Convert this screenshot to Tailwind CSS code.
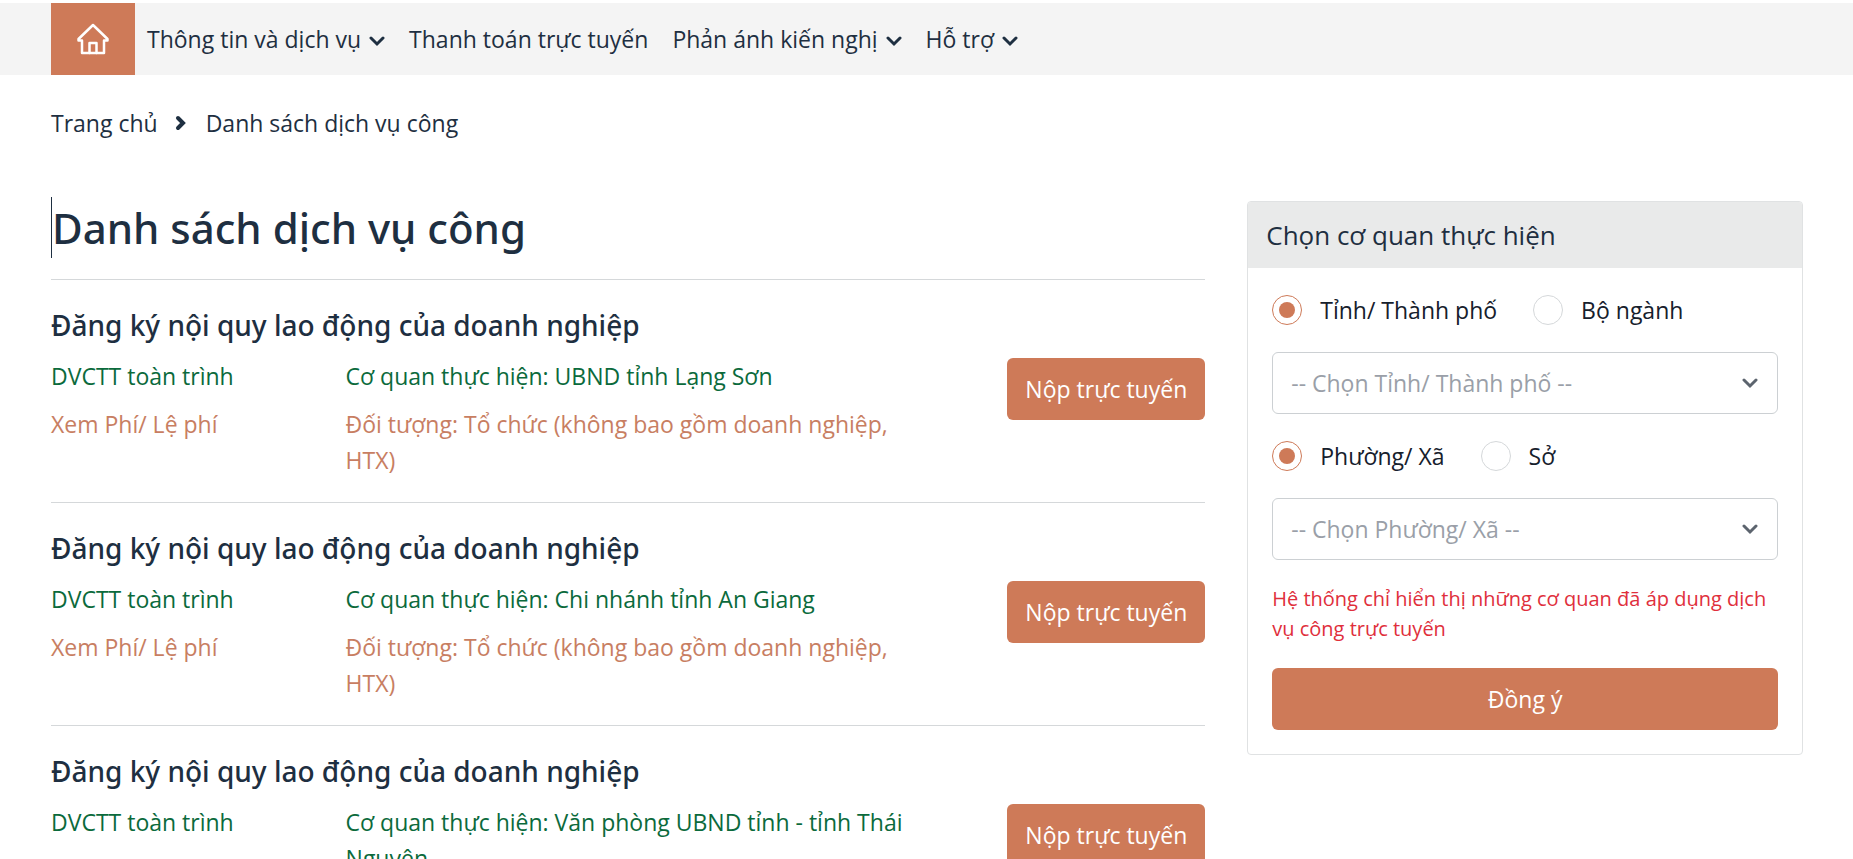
<!DOCTYPE html>
<html lang="vi">

<head>
    <meta charset="UTF-8">
    <meta name="viewport" content="width=device-width, initial-scale=1.0">
    <title>Danh sách dịch vụ công</title>
    <script src="https://cdn.jsdelivr.net/npm/@tailwindcss/browser@4"></script>
</head>

<body class="bg-white font-['Open_Sans',sans-serif] text-[23px] leading-9 text-[#1e2f41]">

    <!-- HEADER -->
    <header class="mt-[3px] bg-[#f4f4f4] px-[51px]">
        <nav class="flex items-center gap-6">
            <a href="#" aria-label="Trang chủ" class="-mr-3 flex h-[72px] w-[84px] items-center justify-center bg-[#ce7a58] text-white">
                <svg class="h-8 w-8" viewBox="0 0 32 32" fill="none" stroke="currentColor" stroke-width="2.5" stroke-linejoin="round" stroke-linecap="round">
                    <path d="M16 2 1.5 16v1.500H5V30h22V17.500h3.500V16Z" />
                    <path d="M12.500 30V20h7v10" />
                </svg>
            </a>
            <a href="#" class="flex items-center gap-2">Thông tin và dịch vụ
                <svg class="mt-1 h-4 w-4" viewBox="0 0 16 16" fill="none" stroke="currentColor" stroke-width="3" stroke-linecap="round"><path d="M2 5l6 6 6-6" /></svg>
            </a>
            <a href="#">Thanh toán trực tuyến</a>
            <a href="#" class="flex items-center gap-2">Phản ánh kiến nghị
                <svg class="mt-1 h-4 w-4" viewBox="0 0 16 16" fill="none" stroke="currentColor" stroke-width="3" stroke-linecap="round"><path d="M2 5l6 6 6-6" /></svg>
            </a>
            <a href="#" class="flex items-center gap-2">Hỗ trợ
                <svg class="mt-1 h-4 w-4" viewBox="0 0 16 16" fill="none" stroke="currentColor" stroke-width="3" stroke-linecap="round"><path d="M2 5l6 6 6-6" /></svg>
            </a>
        </nav>
    </header>

    <!-- BREADCRUMB -->
    <div class="flex items-center px-[51px] pt-[30px]">
        <a href="#">Trang chủ</a>
        <svg class="mr-5 ml-4 h-4 w-3" viewBox="0 0 12 16" fill="none" stroke="currentColor" stroke-width="4" stroke-linecap="round"><path d="M4 3l5 5-5 5" /></svg>
        <span>Danh sách dịch vụ công</span>
    </div>

    <!-- MAIN CONTAINER -->
    <div class="grid grid-cols-[27fr_13fr] items-start gap-[42px] pt-14 pr-[50px] pl-[51px]">

        <!-- DANH SÁCH -->
        <main>
            <h1 class="mb-[21px] border-l border-[#1e2f41] font-['Noto_Sans',sans-serif] text-[42px] leading-[61px] font-medium">Danh sách dịch vụ công</h1>

            <section class="border-t border-[#d5d8da] py-6">
                <h2 class="mb-3 font-['Noto_Sans',sans-serif] text-[28px] leading-[42px] font-medium"><a href="#">Đăng ký nội quy lao động của doanh nghiệp</a></h2>
                <div class="grid grid-cols-4 gap-6">
                    <div class="flex flex-col gap-3">
                        <span class="text-[#0b6a3c]">DVCTT toàn trình</span>
                        <a href="#" class="text-[#c87e62]">Xem Phí/ Lệ phí</a>
                    </div>
                    <div class="col-span-2 flex flex-col gap-3">
                        <p class="text-[#0b6a3c]">Cơ quan thực hiện: UBND tỉnh Lạng Sơn</p>
                        <p class="text-[#c87e62]">Đối tượng: Tổ chức (không bao gồm doanh nghiệp, HTX)</p>
                    </div>
                    <button type="button" class="h-[62px] self-start justify-self-end rounded-md bg-[#ce7a58] px-[18px] whitespace-nowrap text-white">Nộp trực tuyến</button>
                </div>
            </section>

            <section class="border-t border-[#d5d8da] py-6">
                <h2 class="mb-3 font-['Noto_Sans',sans-serif] text-[28px] leading-[42px] font-medium"><a href="#">Đăng ký nội quy lao động của doanh nghiệp</a></h2>
                <div class="grid grid-cols-4 gap-6">
                    <div class="flex flex-col gap-3">
                        <span class="text-[#0b6a3c]">DVCTT toàn trình</span>
                        <a href="#" class="text-[#c87e62]">Xem Phí/ Lệ phí</a>
                    </div>
                    <div class="col-span-2 flex flex-col gap-3">
                        <p class="text-[#0b6a3c]">Cơ quan thực hiện: Chi nhánh tỉnh An Giang</p>
                        <p class="text-[#c87e62]">Đối tượng: Tổ chức (không bao gồm doanh nghiệp, HTX)</p>
                    </div>
                    <button type="button" class="h-[62px] self-start justify-self-end rounded-md bg-[#ce7a58] px-[18px] whitespace-nowrap text-white">Nộp trực tuyến</button>
                </div>
            </section>

            <section class="border-t border-[#d5d8da] py-6">
                <h2 class="mb-3 font-['Noto_Sans',sans-serif] text-[28px] leading-[42px] font-medium"><a href="#">Đăng ký nội quy lao động của doanh nghiệp</a></h2>
                <div class="grid grid-cols-4 gap-6">
                    <div class="flex flex-col gap-3">
                        <span class="text-[#0b6a3c]">DVCTT toàn trình</span>
                    </div>
                    <div class="col-span-2 flex flex-col gap-3">
                        <p class="text-[#0b6a3c]">Cơ quan thực hiện: Văn phòng UBND tỉnh - tỉnh Thái Nguyên</p>
                    </div>
                    <button type="button" class="h-[62px] self-start justify-self-end rounded-md bg-[#ce7a58] px-[18px] whitespace-nowrap text-white">Nộp trực tuyến</button>
                </div>
            </section>
        </main>

        <!-- SIDEBAR -->
        <aside class="mt-1 overflow-hidden rounded border border-[#e0e2e3]">
            <h3 class="bg-[#e9eaea] px-[18px] py-[15px] text-[26px]">Chọn cơ quan thực hiện</h3>
            <form class="flex flex-col gap-6 p-6">
                <div class="flex gap-9 text-[#16202c]">
                    <label class="flex items-center gap-[18px]">
                        <input type="radio" name="cap" checked class="flex h-[30px] w-[30px] appearance-none items-center justify-center rounded-full border border-[#d5d8da] checked:border-[#ce7a58] checked:before:h-4 checked:before:w-4 checked:before:rounded-full checked:before:bg-[#ce7a58]">
                        Tỉnh/ Thành phố
                    </label>
                    <label class="flex items-center gap-[18px]">
                        <input type="radio" name="cap" class="flex h-[30px] w-[30px] appearance-none items-center justify-center rounded-full border border-[#d5d8da] checked:border-[#ce7a58] checked:before:h-4 checked:before:w-4 checked:before:rounded-full checked:before:bg-[#ce7a58]">
                        Bộ ngành
                    </label>
                </div>
                <div class="relative">
                    <select aria-label="Tỉnh/ Thành phố" class="h-[62px] w-full appearance-none rounded-md border border-[#ccd0d3] bg-white px-[18px] text-[#9a9fa8]">
                        <option>-- Chọn Tỉnh/ Thành phố --</option>
                    </select>
                    <svg class="pointer-events-none absolute top-6 right-5 h-4 w-4 text-[#5c646e]" viewBox="0 0 16 16" fill="none" stroke="currentColor" stroke-width="3" stroke-linecap="round"><path d="M2 4l6 6 6-6" /></svg>
                </div>
                <div class="flex gap-9 text-[#16202c]">
                    <label class="flex items-center gap-[18px]">
                        <input type="radio" name="donvi" checked class="flex h-[30px] w-[30px] appearance-none items-center justify-center rounded-full border border-[#d5d8da] checked:border-[#ce7a58] checked:before:h-4 checked:before:w-4 checked:before:rounded-full checked:before:bg-[#ce7a58]">
                        Phường/ Xã
                    </label>
                    <label class="flex items-center gap-[18px]">
                        <input type="radio" name="donvi" class="flex h-[30px] w-[30px] appearance-none items-center justify-center rounded-full border border-[#d5d8da] checked:border-[#ce7a58] checked:before:h-4 checked:before:w-4 checked:before:rounded-full checked:before:bg-[#ce7a58]">
                        Sở
                    </label>
                </div>
                <div class="relative">
                    <select aria-label="Phường/ Xã" class="h-[62px] w-full appearance-none rounded-md border border-[#ccd0d3] bg-white px-[18px] text-[#9a9fa8]">
                        <option>-- Chọn Phường/ Xã --</option>
                    </select>
                    <svg class="pointer-events-none absolute top-6 right-5 h-4 w-4 text-[#5c646e]" viewBox="0 0 16 16" fill="none" stroke="currentColor" stroke-width="3" stroke-linecap="round"><path d="M2 4l6 6 6-6" /></svg>
                </div>
                <p class="text-xl leading-[30px] text-[#e02f3c]">Hệ thống chỉ hiển thị những cơ quan đã áp dụng dịch vụ công trực tuyến</p>
                <button type="submit" class="h-[62px] rounded-md bg-[#ce7a58] text-white">Đồng ý</button>
            </form>
        </aside>
    </div>

</body>

</html>
